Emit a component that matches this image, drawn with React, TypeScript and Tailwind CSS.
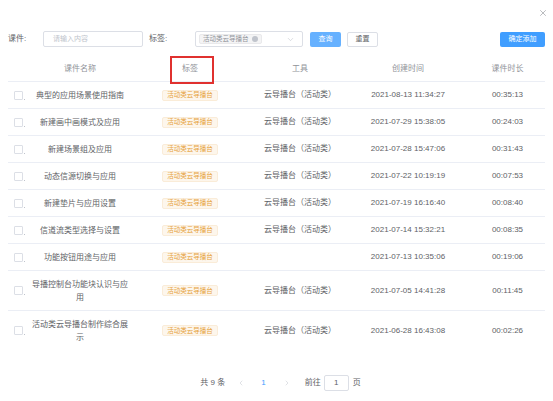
import { X, ChevronDown, ChevronLeft, ChevronRight } from 'lucide-react';

const rows = [
    { name: '典型的应用场景使用指南', tool: '云导播台（活动类）', time: '2021-08-13 11:34:27', dur: '00:35:13' },
    { name: '新建画中画模式及应用', tool: '云导播台（活动类）', time: '2021-07-29 15:38:05', dur: '00:24:03' },
    { name: '新建场景组及应用', tool: '云导播台（活动类）', time: '2021-07-28 15:47:06', dur: '00:31:43' },
    { name: '动态信源切换与应用', tool: '云导播台（活动类）', time: '2021-07-22 10:19:19', dur: '00:07:53' },
    { name: '新建垫片与应用设置', tool: '云导播台（活动类）', time: '2021-07-19 16:16:40', dur: '00:08:40' },
    { name: '信道流类型选择与设置', tool: '云导播台（活动类）', time: '2021-07-14 15:32:21', dur: '00:08:35' },
    { name: '功能按钮用途与应用', tool: '', time: '2021-07-13 10:35:06', dur: '00:19:06' },
    { name: '导播控制台功能块认识与应用', tool: '云导播台（活动类）', time: '2021-07-05 14:41:28', dur: '00:11:45' },
    { name: '活动类云导播台制作综合展示', tool: '云导播台（活动类）', time: '2021-06-28 16:43:08', dur: '00:02:26' },
];

const cols = 'grid grid-cols-[22px_100px_120px_100px_116px_83px]';

export default function App() {
    return (
        <div
            className="relative w-[553px] h-[401px] bg-white overflow-hidden text-[8px] text-[#606266]"
            style={{ fontFamily: '"Liberation Sans", "Noto Sans CJK SC", sans-serif' }}
        >
            {/* close */}
            <div className="h-[26px] flex justify-end items-center pr-[5px]">
                <X size={10} strokeWidth={1.5} className="text-[#909399]" />
            </div>

            {/* filters */}
            <div className="mt-[5px] h-[16px] flex items-center px-[8px]">
                <span className="w-[35px]">课件:</span>
                <div className="w-[100px] h-[16px] border border-[#dcdfe6] rounded-[2px] flex items-center pl-[9px] text-[#c0c4cc] text-[7px]">
                    请输入内容
                </div>
                <span className="ml-[6px] w-[46px]">标签:</span>
                <div className="w-[108px] h-[16px] border border-[#dcdfe6] rounded-[2px] flex items-center px-[3px] justify-between">
                    <span className="h-[10px] px-[3px] bg-[#f4f4f5] border border-[#e9e9eb] rounded-[2px] flex items-center gap-[3px] text-[#909399] text-[6.5px]">
                        活动类云导播台
                        <span className="w-[6px] h-[6px] rounded-full bg-[#c0c4cc]" />
                    </span>
                    <ChevronDown size={9} strokeWidth={1.5} className="text-[#c0c4cc] mr-[4px]" />
                </div>
                <button className="ml-[7px] w-[31px] h-[15px] rounded-[2px] bg-[#66b1ff] text-white text-[7px]">查询</button>
                <button className="ml-[6px] w-[31px] h-[15px] rounded-[2px] border border-[#dcdfe6] text-[#606266] text-[7px]">重置</button>
                <div className="flex-1" />
                <button className="w-[45px] h-[15px] rounded-[2px] bg-[#409eff] text-white text-[7px]">确定添加</button>
            </div>

            {/* table */}
            <div className="mx-[8px] mt-[9px]">
                <div className={`${cols} h-[26px] items-center border-b border-[#ebeef5] text-[#909399] text-center`}>
                    <div />
                    <div>课件名称</div>
                    <div>标签</div>
                    <div>工具</div>
                    <div>创建时间</div>
                    <div>课件时长</div>
                </div>
                {rows.map((r, i) => (
                    <div
                        key={i}
                        className={`${cols} items-center text-center border-b ${i === rows.length - 1 ? 'border-transparent' : 'border-[#ebeef5]'} ${r.name.length > 11 ? 'h-[40px]' : 'h-[27px]'}`}
                    >
                        <div className="flex items-end pl-[6px]">
                            <span className="w-[9px] h-[9px] border border-[#dcdfe6] rounded-[1px]" />
                            <span className="w-[1px] h-[1px] bg-[#c0c4cc] ml-[1px]" />
                        </div>
                        <div className="px-[2px] leading-[13px]">{r.name}</div>
                        <div className="flex justify-center">
                            <span className="h-[11px] px-[4px] flex items-center bg-[#fdf6ec] border border-[#faecd8] rounded-[2px] text-[#e6a23c] text-[6.5px]">
                                活动类云导播台
                            </span>
                        </div>
                        <div>{r.tool}</div>
                        <div>{r.time}</div>
                        <div>{r.dur}</div>
                    </div>
                ))}
            </div>

            {/* pagination */}
            <div className="mt-[24px] flex items-center justify-center text-[#606266] pl-[8px]">
                <span>共 9 条</span>
                <ChevronLeft size={8} strokeWidth={1.5} className="ml-[12px] text-[#c0c4cc]" />
                <span className="ml-[16px] text-[#409eff]">1</span>
                <ChevronRight size={8} strokeWidth={1.5} className="ml-[17px] text-[#c0c4cc]" />
                <span className="ml-[14px]">前往</span>
                <div className="ml-[3px] w-[25px] h-[16px] border border-[#dcdfe6] rounded-[2px] flex items-center justify-center">1</div>
                <span className="ml-[4px]">页</span>
            </div>

            {/* annotation */}
            <div className="absolute left-[170px] top-[56px] w-[44px] h-[28px] border-2 border-[#e0312f]" />
        </div>
    );
}
